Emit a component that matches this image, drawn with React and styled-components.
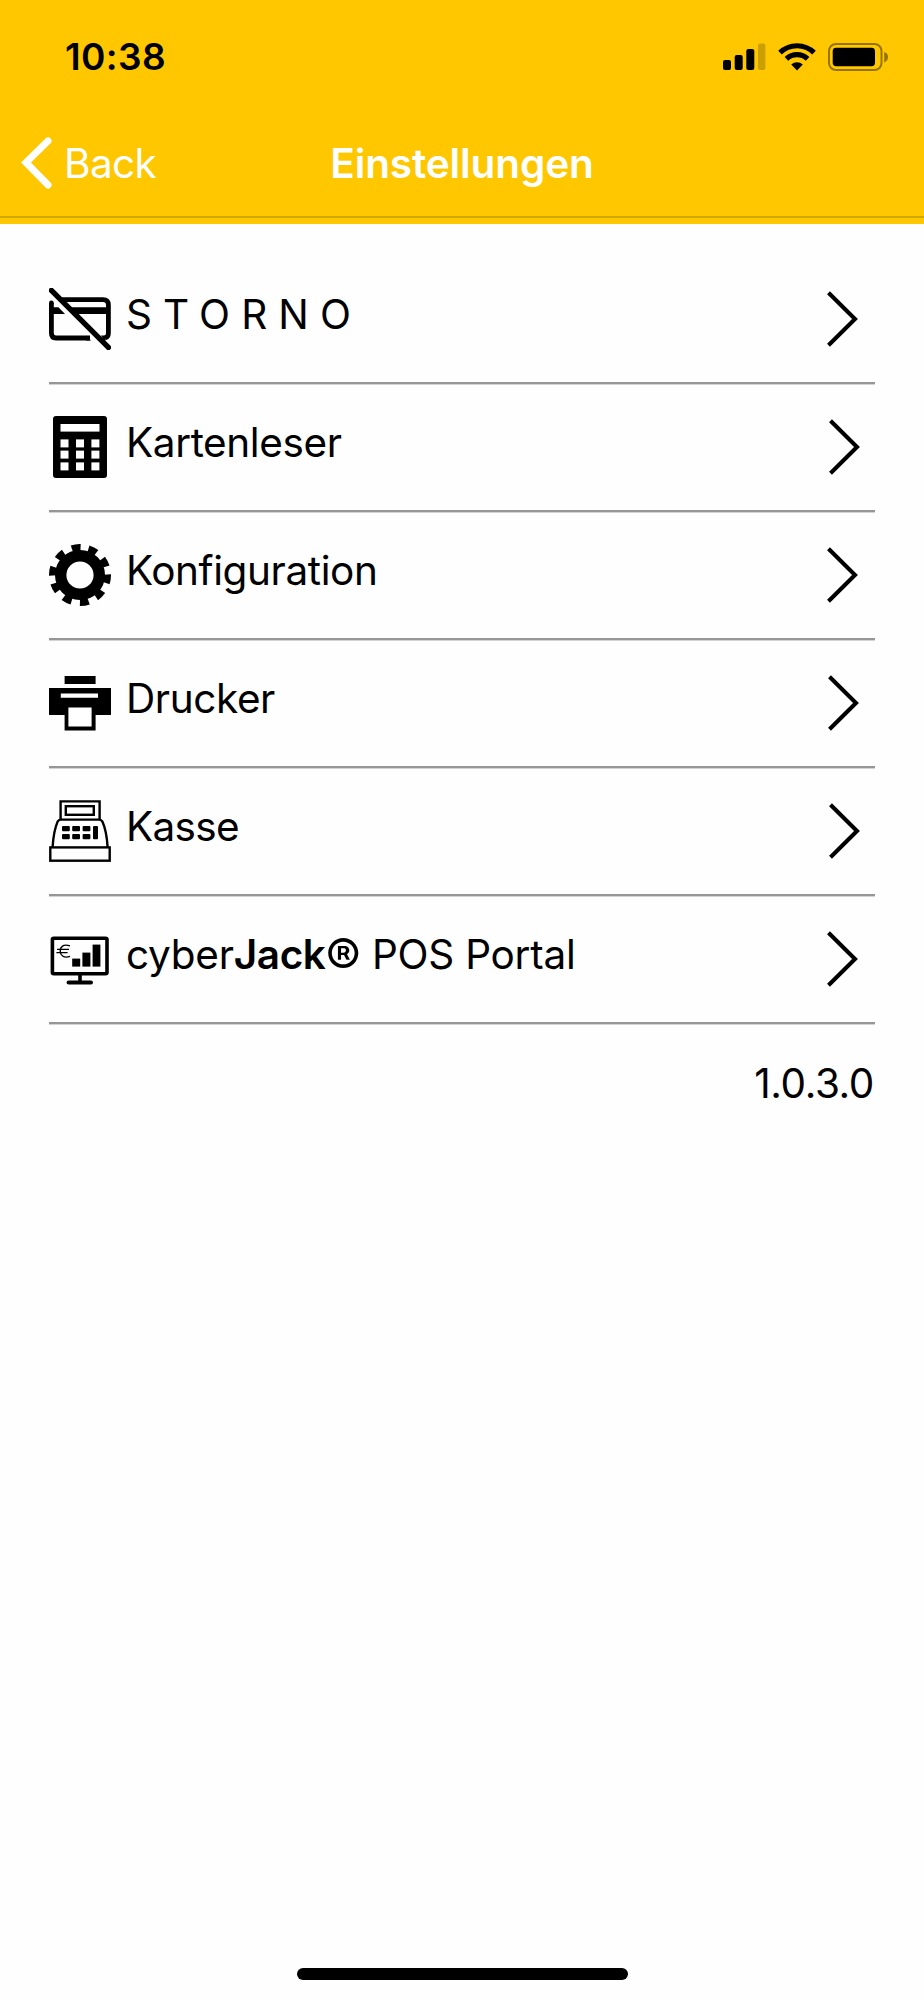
import React from "react";
import styled, { createGlobalStyle } from "styled-components";

const GlobalStyle = createGlobalStyle`
  body {
    margin: 0;
    background-color: #fefefe;
  }
  * {
    box-sizing: border-box;
  }
`;

const SignalIcon = () => (
  <svg width="43" height="28" viewBox="0 0 43 28">
    <rect x="0" y="17" width="8" height="10" rx="2" />
    <rect x="11.7" y="12" width="8" height="15" rx="2" />
    <rect x="23.3" y="6" width="8" height="21" rx="2" />
    <rect x="35" y="0.6" width="7.4" height="26.4" rx="2" opacity="0.2" />
  </svg>
);

const WifiIcon = () => (
  <svg width="38" height="28" viewBox="0 0 38 28">
    <g fill="none" stroke="#000" strokeWidth="5.2">
      <path d="M2 9.6 A 24.5 24.5 0 0 1 36 9.6" />
      <path d="M8.4 15.8 A 15.5 15.5 0 0 1 29.6 15.8" />
    </g>
    <path d="M13.2 21.4 A 8.6 8.6 0 0 1 24.8 21.4 L19 27.4 Z" />
  </svg>
);

const BatteryIcon = () => (
  <svg width="61" height="28" viewBox="0 0 61 28">
    <rect
      x="1"
      y="1"
      width="52.5"
      height="26"
      rx="7"
      fill="none"
      stroke="#000"
      strokeOpacity="0.42"
      strokeWidth="2"
    />
    <rect x="4.7" y="4.8" width="42.3" height="18.4" rx="3.4" />
    <path d="M56.2 9 Q60 10 60 14 Q60 18 56.2 19.4 Z" opacity="0.42" />
  </svg>
);

const CardOffIcon = () => (
  <svg viewBox="0 0 62 62">
    <g fill="none" stroke="#000" strokeWidth="4.8">
      <path d="M2.4 15 V45 Q2.4 50 7 50 H41" />
      <path d="M13 11.6 H54 Q59.4 11.6 59.4 17 V45 Q59.4 49 56 49.8" />
      <path d="M2.4 2.4 L59.4 59.4" strokeLinecap="round" strokeWidth="5.4" />
    </g>
    <circle cx="2.4" cy="15" r="2.4" />
    <path d="M3 19.2 H9.4 L16 26 H3 Z M21.5 19.2 H60 V26 H28.5 Z" />
    <path d="M37 47.6 L42 52.4 H37 Z M52 47.6 H57 L56 54 Z" />
  </svg>
);

const CalculatorIcon = () => (
  <svg viewBox="0 0 62 62">
    <rect x="4" y="0" width="54" height="62" rx="3" />
    <rect x="11.5" y="8" width="39" height="7.6" fill="#fff" />
    {[23.4, 34.6, 46.4].map((y) =>
      [11.5, 27, 42.4].map((x) => (
        <rect key={`${x}-${y}`} x={x} y={y} width="8" height="8" fill="#fff" />
      ))
    )}
  </svg>
);

const GearIcon = () => (
  <svg viewBox="0 0 62 62">
    <circle cx="31" cy="31" r="19.3" fill="none" stroke="#000" strokeWidth="11.4" />
    {[-8, 27, 63, 98, 135, 171, 207, 243, 278, 315].map((angle) => (
      <path
        key={angle}
        d="M26 0.4 Q31 -0.4 36 0.4 L34.6 8 H27.4 Z"
        transform={`rotate(${angle} 31 31)`}
      />
    ))}
  </svg>
);

const PrinterIcon = () => (
  <svg viewBox="0 0 62 62">
    <rect x="15.6" y="4" width="31" height="8" />
    <path d="M0 16 H62 V43 H46.6 V58.4 H15.6 V43 H0 Z" />
    <path d="M11.8 21.6 H49 V25.8 H11.8 Z M19.4 35.4 H42.6 V54.6 H19.4 Z" fill="#fff" />
  </svg>
);

const RegisterIcon = () => (
  <svg viewBox="0 0 62 62">
    <g fill="none" stroke="#000" strokeWidth="2.4">
      <path d="M11.6 19 V1.4 H50.6 V19" />
      <rect x="16.8" y="6.2" width="28" height="8.6" />
      <path d="M3.6 47 Q4.6 31 8.6 21.6 Q9.6 19.6 12 19.6 H50 Q52.4 19.6 53.4 21.6 Q57.6 31 58.6 47" />
      <rect x="1.3" y="47.4" width="59.4" height="13.3" />
    </g>
    {[26, 34].map((y) =>
      [13, 23.2, 33.6].map((x) => (
        <rect key={`${x}-${y}`} x={x} y={y} width="7.8" height="5.2" rx="1" />
      ))
    )}
    <rect x="44" y="26" width="5" height="13.2" rx="1" />
  </svg>
);

const MonitorIcon = () => (
  <svg viewBox="0 0 62 62">
    <g fill="none" stroke="#000" strokeWidth="3.6">
      <rect x="3.4" y="10.2" width="54.6" height="35.6" rx="1.5" />
      <path d="M31 47 V55" strokeWidth="3.6" />
      <path d="M19.6 54.6 H42" strokeWidth="4" strokeLinecap="round" />
      <path
        d="M21 17.8 C14 15.6 11.2 19 11.2 23 C11.2 27 14.4 30.6 21 28.4 M8 21.4 H20 M7.4 24.6 H18.6"
        strokeWidth="1.4"
      />
    </g>
    <rect x="23.2" y="30.6" width="8" height="8" />
    <rect x="33.4" y="24.6" width="8" height="14" />
    <rect x="43.6" y="16.6" width="7.8" height="22" />
  </svg>
);

const menuItems = [
  { id: "storno", icon: CardOffIcon, label: "STORNO", spacing: "11.1px" },
  { id: "reader", icon: CalculatorIcon, label: "Kartenleser", shift: 2 },
  { id: "config", icon: GearIcon, label: "Konfiguration" },
  { id: "printer", icon: PrinterIcon, label: "Drucker", shift: 1 },
  {
    id: "register",
    icon: RegisterIcon,
    label: "Kasse",
    spacing: "-0.7px",
    shift: 2,
  },
  {
    id: "portal",
    icon: MonitorIcon,
    label: (
      <>
        cyber<b>Jack</b>
        <sup>®</sup> POS Portal
      </>
    ),
    spacing: "-0.25px",
  },
];

const App = () => {
  return (
    <Screen>
      <GlobalStyle />
      <Header>
        <StatusBar>
          <Clock>10:38</Clock>
          <StatusIcons>
            <SignalIcon />
            <WifiIcon />
            <BatteryIcon />
          </StatusIcons>
        </StatusBar>
        <NavBar>
          <BackButton>
            <svg width="32" height="54" viewBox="0 0 32 54">
              <path
                d="M27 5 L5 26.5 L27 49"
                fill="none"
                stroke="#fff"
                strokeWidth="7"
                strokeLinecap="round"
              />
            </svg>
            Back
          </BackButton>
          <Title>Einstellungen</Title>
        </NavBar>
      </Header>
      <Menu>
        {menuItems.map(({ id, icon: Icon, label, spacing, shift }) => (
          <MenuRow key={id}>
            <Icon />
            <Label $spacing={spacing}>{label}</Label>
            <Chevron $shift={shift} viewBox="0 0 31 56">
              <path
                d="M1.5 1.8 L28 28 L1.5 54.2"
                fill="none"
                stroke="#000"
                strokeWidth="4.1"
              />
            </Chevron>
          </MenuRow>
        ))}
      </Menu>
      <Version>1.0.3.0</Version>
      <HomeIndicator />
    </Screen>
  );
};

const Screen = styled.div`
  display: flex;
  flex-direction: column;
  width: 924px;
  height: 2000px;
  overflow: hidden;
  background-color: #fefefe;
  color: #000;
  font-family: Inter, "Liberation Sans", sans-serif;
  font-size: 40.5px;
`;

const Header = styled.header`
  height: 224px;
  background-color: #ffc700;
`;

const StatusBar = styled.div`
  display: flex;
  justify-content: space-between;
  height: 110px;
  padding: 43px 35px 0 65px;
`;

const Clock = styled.span`
  font-size: 37px;
  font-weight: 600;
  line-height: 28px;
  letter-spacing: 0.4px;
`;

const StatusIcons = styled.div`
  display: flex;
  gap: 12px;
`;

const NavBar = styled.nav`
  display: grid;
  grid-template-columns: 1fr auto 1fr;
  align-items: center;
  height: 108px;
  padding: 0 21px;
  border-bottom: 2px solid #d3a500;
  color: #fff;
`;

const BackButton = styled.button`
  display: flex;
  align-items: center;
  gap: 11px;
  padding: 0;
  border: none;
  background: none;
  color: #fff;
  font: inherit;
  letter-spacing: -0.6px;
`;

const Title = styled.h1`
  margin: 0;
  font-size: 40.5px;
  font-weight: 600;
  letter-spacing: -0.1px;
`;

const Menu = styled.div`
  padding: 32px 49px 0;
`;

const MenuRow = styled.div`
  display: flex;
  align-items: flex-start;
  height: 128px;
  padding-top: 32px;
  border-bottom: 2px solid #969696;
  box-shadow: 0 1px 0 #d4d4d4;

  > svg:first-child {
    flex: none;
    width: 62px;
    height: 62px;
  }
`;

const Label = styled.span`
  flex: 1;
  margin-left: 15px;
  line-height: 54px;
  white-space: nowrap;
  letter-spacing: ${({ $spacing }) => $spacing || "-0.4px"};

  b {
    font-weight: 600;
    letter-spacing: -0.4px;
  }

  sup {
    font-size: 53px;
    line-height: 0;
    vertical-align: -8px;
  }
`;

const Chevron = styled.svg`
  flex: none;
  width: 31px;
  height: 56px;
  margin: 3px ${({ $shift }) => 17.5 - ($shift || 0)}px 0 0;
`;

const Version = styled.div`
  padding: 33px 50px 0;
  line-height: 53px;
  text-align: right;
  letter-spacing: -0.4px;
`;

const HomeIndicator = styled.div`
  align-self: center;
  width: 331px;
  height: 12px;
  margin-top: auto;
  margin-bottom: 20px;
  border-radius: 6px;
  background-color: #000;
`;

export default App;
